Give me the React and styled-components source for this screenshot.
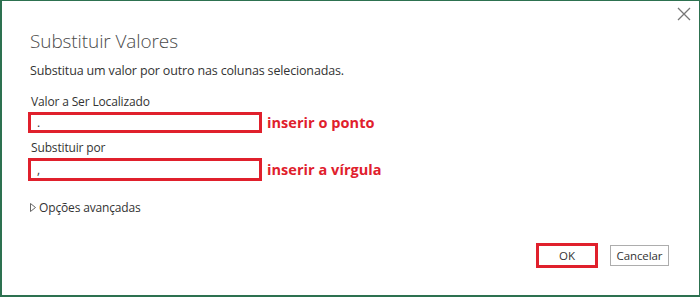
import React from "react";
import styled, { createGlobalStyle } from "styled-components";

const Global = createGlobalStyle`
  html, body { margin: 0; padding: 0; background: #fff; }
  * { box-sizing: border-box; }
  body { font-family: "Open Sans", "Noto Sans", sans-serif; }
`;

const Dialog = styled.div`
  width: 700px;
  height: 297px;
  border: 1px solid #2d7150;
  border-bottom-width: 2px;
  border-left-width: 2px;
  background: #fff;
  display: flex;
  flex-direction: column;
  color: #333;
`;

const TopBar = styled.div`
  display: flex;
  justify-content: flex-end;
  height: 27px;
  padding: 6px 8px 0 0;
`;

const CloseBtn = styled.button`
  border: 0;
  background: transparent;
  padding: 0;
  width: 14px;
  height: 14px;
  display: flex;
  cursor: pointer;
`;

const Content = styled.div`
  flex: 1;
  padding: 0 0 0 28px;
  display: flex;
  flex-direction: column;
`;

const Title = styled.h1`
  margin: 0;
  font-weight: 300;
  font-size: 19px;
  line-height: 26px;
  color: #4a4a4a;
  letter-spacing: -0.1px;
`;

const Subtitle = styled.p`
  margin: 8px 0 0 0;
  font-size: 12.5px;
  line-height: 18px;
  color: #333;
  letter-spacing: -0.15px;
`;

const Field = styled.div`
  display: flex;
  flex-direction: column;
  margin-top: ${(p) => p.$mt}px;
`;

const Label = styled.label`
  font-size: 12px;
  line-height: 16px;
  color: #333;
  padding-left: 1px;
  letter-spacing: -0.15px;
`;

const InputRow = styled.div`
  display: flex;
  align-items: center;
  gap: 5px;
  margin-top: ${(p) => p.$mt}px;
`;

const Input = styled.div`
  width: 234px;
  height: ${(p) => p.$h}px;
  border: 3px solid #e0202c;
  margin-left: -2px;
  font-size: 12px;
  line-height: 14px;
  padding-left: 6px;
  color: #333;
  display: flex;
  align-items: center;
`;

const Note = styled.span`
  color: #e0202c;
  font-weight: 700;
  font-size: 14.5px;
  letter-spacing: 0.05px;
`;

const Advanced = styled.div`
  display: flex;
  align-items: center;
  gap: 3px;
  margin-top: 18px;
  font-size: 12px;
  color: #333;
  letter-spacing: -0.15px;
`;

const Footer = styled.div`
  display: flex;
  justify-content: flex-end;
  align-items: center;
  gap: 12px;
  padding: 0 30px 0 0;
  margin-top: auto;
  margin-bottom: 27px;
`;

const Button = styled.button`
  font-family: "Open Sans", "Noto Sans", sans-serif;
  font-size: 11.5px;
  color: #333;
  background: #fff;
  padding: 0;
  width: ${(p) => p.$w}px;
  height: ${(p) => p.$h}px;
  border: ${(p) => (p.$marked ? "3px solid #e0202c" : "1px solid #adadad")};
  letter-spacing: -0.1px;
`;

export default function App() {
  return (
    <>
      <Global />
      <Dialog>
        <TopBar>
          <CloseBtn aria-label="Fechar">
            <svg width="14" height="14" viewBox="0 0 14 14">
              <path d="M1 1 L13 13 M13 1 L1 13" stroke="#777" strokeWidth="1.3" fill="none" />
            </svg>
          </CloseBtn>
        </TopBar>
        <Content>
          <Title>Substituir Valores</Title>
          <Subtitle>Substitua um valor por outro nas colunas selecionadas.</Subtitle>
          <Field $mt={14}>
            <Label>Valor a Ser Localizado</Label>
            <InputRow $mt={2}>
              <Input $h={21}>.</Input>
              <Note>inserir o ponto</Note>
            </InputRow>
          </Field>
          <Field $mt={7}>
            <Label>Substituir por</Label>
            <InputRow $mt={2}>
              <Input $h={23}>,</Input>
              <Note>inserir a vírgula</Note>
            </InputRow>
          </Field>
          <Advanced>
            <svg width="6" height="9" viewBox="0 0 6 9">
              <path d="M0.5 0.5 L5.5 4.5 L0.5 8.5 Z" stroke="#555" strokeWidth="0.9" fill="none" />
            </svg>
            <span>Opções avançadas</span>
          </Advanced>
        </Content>
        <Footer>
          <Button $marked $w={62} $h={25}>OK</Button>
          <Button $w={59} $h={21}>Cancelar</Button>
        </Footer>
      </Dialog>
    </>
  );
}
